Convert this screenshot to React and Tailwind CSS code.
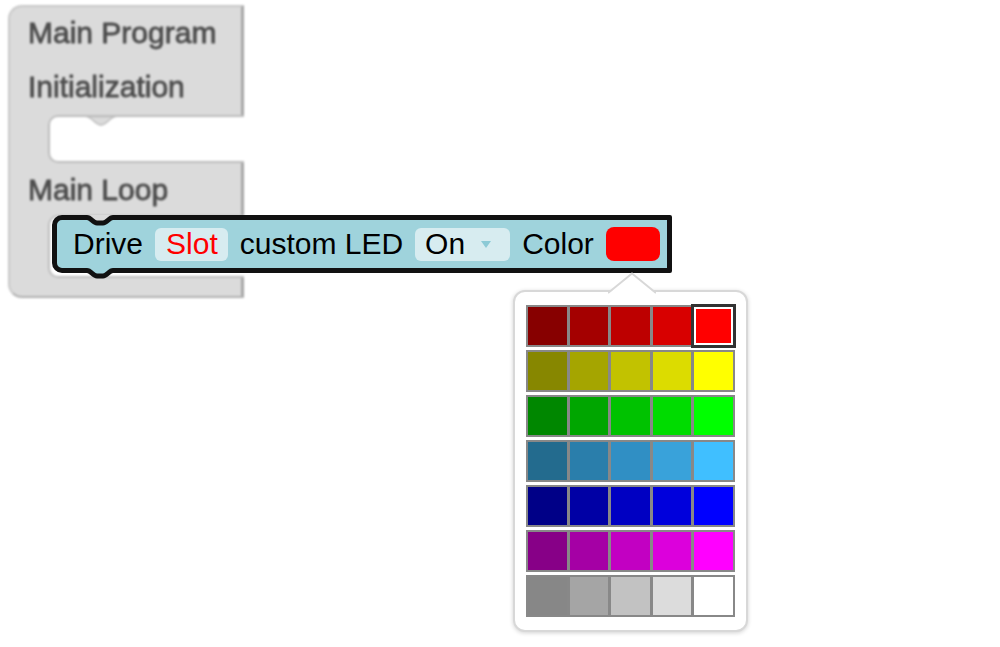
import React from "react";

const rows = [
  ["bg-[#870000]", "bg-[#a40000]", "bg-[#bd0000]", "bg-[#d80000]", "bg-[#ff0000]"],
  ["bg-[#878700]", "bg-[#a5a500]", "bg-[#c2c200]", "bg-[#dcdc00]", "bg-[#ffff00]"],
  ["bg-[#008700]", "bg-[#00a600]", "bg-[#00c200]", "bg-[#00dc00]", "bg-[#00ff00]"],
  ["bg-[#236b8e]", "bg-[#2a7eab]", "bg-[#308fc4]", "bg-[#39a2da]", "bg-[#40bfff]"],
  ["bg-[#000087]", "bg-[#0000a5]", "bg-[#0000c2]", "bg-[#0000dc]", "bg-[#0000ff]"],
  ["bg-[#870087]", "bg-[#a500a5]", "bg-[#c200c2]", "bg-[#dc00dc]", "bg-[#ff00ff]"],
  ["bg-[#878787]", "bg-[#a5a5a5]", "bg-[#c2c2c2]", "bg-[#dcdcdc]", "bg-[#ffffff]"],
];

function SlotNotch() {
  return (
    <svg className="absolute left-[36px] top-[-1.5px]" width="30" height="12" viewBox="0 0 30 12">
      <path d="M0 0.5 C 6 0.5, 9 9, 15 9 C 21 9, 24 0.5, 30 0.5 Z" fill="#dbdbdb" stroke="#bdbdbd" strokeWidth="1.5" />
    </svg>
  );
}

function GrayBlock() {
  return (
    <div
      className="absolute left-[8px] top-[5px] w-[236px] blur-[1px] text-[#4c4c4c] text-[30px] leading-[30px] [-webkit-text-stroke:0.8px_#4c4c4c]"
      style={{ fontFamily: '"Liberation Sans", Arial, sans-serif' }}
    >
      <div className="h-[110px] bg-[#dbdbdb] rounded-tl-[14px] border-l-2 border-t-2 border-[#c9c9c9] border-r-[3px] border-r-[#a6a6a6] pt-[11px] pl-[18px]">
        <div className="whitespace-nowrap">Main Program</div>
        <div className="mt-[24px] whitespace-nowrap">Initialization</div>
      </div>
      <div className="h-[48px] flex bg-[#dbdbdb] border-l-2 border-[#c9c9c9]">
        <div className="w-[38px]" />
        <div className="relative flex-1 bg-white rounded-l-[10px] border-l-2 border-y-2 border-[#bdbdbd]">
          <SlotNotch />
        </div>
      </div>
      <div className="h-[52px] bg-[#dbdbdb] border-l-2 border-[#c9c9c9] border-r-[3px] border-r-[#a6a6a6] pt-[12px] pl-[18px]">
        <div className="whitespace-nowrap">Main Loop</div>
      </div>
      <div className="h-[63px] flex bg-[#dbdbdb] border-l-2 border-[#c9c9c9]">
        <div className="w-[38px]" />
        <div className="relative flex-1 bg-white rounded-l-[10px] border-l-2 border-y-2 border-[#bdbdbd]">
          <SlotNotch />
        </div>
      </div>
      <div className="h-[20px] bg-[#dbdbdb] rounded-bl-[14px] border-l-2 border-[#c9c9c9] border-b-2 border-b-[#b0b0b0] border-r-[3px] border-r-[#a6a6a6]" />
    </div>
  );
}

function DriveBlock() {
  return (
    <div
      className="absolute left-[52px] top-[215px] h-[58px] flex items-center gap-[12px] border-[5px] border-[#111111] rounded-l-[10px] rounded-r-[2px] bg-[#9fd3dc] pl-[16px] pr-[7px] text-[30px] leading-none text-black whitespace-nowrap"
      style={{ fontFamily: '"Liberation Sans", Arial, sans-serif' }}
    >
      <svg className="absolute left-[30px] top-[-5px]" width="26" height="14" viewBox="0 0 26 14">
        <path d="M0 2.5 C 4 2.5, 6 8, 10 8 L 16 8 C 20 8, 22 2.5, 26 2.5 L 26 14 L 0 14 Z" fill="#9fd3dc" />
        <path d="M0 -1 L 0 2.5 C 4 2.5, 6 8, 10 8 L 16 8 C 20 8, 22 2.5, 26 2.5 L 26 -1 Z" fill="#dbdbdb" />
        <path d="M0 2.5 C 4 2.5, 6 8, 10 8 L 16 8 C 20 8, 22 2.5, 26 2.5" fill="none" stroke="#111111" strokeWidth="5" />
      </svg>
      <svg className="absolute left-[30px] bottom-[-11px]" width="26" height="14" viewBox="0 0 26 14">
        <path d="M0 0 L 0 5.5 C 4 5.5, 6 11, 10 11 L 16 11 C 20 11, 22 5.5, 26 5.5 L 26 0 Z" fill="#9fd3dc" />
        <path d="M0 5.5 C 4 5.5, 6 11, 10 11 L 16 11 C 20 11, 22 5.5, 26 5.5" fill="none" stroke="#111111" strokeWidth="5" />
      </svg>
      <span>Drive</span>
      <span className="h-[33px] flex items-center rounded-[6px] bg-[#d7ecf0] pl-[11px] pr-[10px] text-[#ff0000]">Slot</span>
      <span>custom LED</span>
      <span className="h-[33px] flex items-center rounded-[6px] bg-[#d7ecf0] pl-[10px] pr-[19px]">
        <span>On</span>
        <svg className="ml-[16px]" width="10" height="7" viewBox="0 0 10 7">
          <path d="M0 0 L 10 0 L 5 7 Z" fill="#8ccad6" />
        </svg>
      </span>
      <span>Color</span>
      <span className="w-[54px] h-[34px] rounded-[8px] bg-[#ff0000]" />
    </div>
  );
}

function ColourPopup() {
  return (
    <div className="absolute left-[513px] top-[290px] w-[235px] h-[342px] bg-white border-2 border-[#d8d8d8] rounded-[12px] shadow-[0_1px_4px_rgba(0,0,0,0.18)] pl-[11px] pt-[13px]">
      <svg className="absolute left-[93px] top-[-20px]" width="48" height="23" viewBox="0 0 48 23">
        <path d="M0 22 L 24 1.5 L 48 22 L 48 23 L 0 23 Z" fill="#ffffff" />
        <path d="M0 21 L 24 1.5 L 48 21" fill="none" stroke="#d8d8d8" strokeWidth="2" />
      </svg>
      <div className="relative flex flex-col gap-[3px] w-[209px]">
        {rows.map((row, r) => (
          <div key={r} className="h-[42px] flex gap-[3px] bg-[#888888] p-[2px]">
            {row.map((c, i) => (
              <div
                key={i}
                className={
                  "flex-1 " +
                  c +
                  (r === 0 && i === 4
                    ? " relative z-10 shadow-[0_0_0_3px_#333333,inset_0_0_0_2px_#ffffff]"
                    : "")
                }
              />
            ))}
          </div>
        ))}
      </div>
    </div>
  );
}

export default function App() {
  return (
    <div className="relative w-[1000px] h-[647px] bg-white overflow-hidden">
      <GrayBlock />
      <DriveBlock />
      <ColourPopup />
    </div>
  );
}
